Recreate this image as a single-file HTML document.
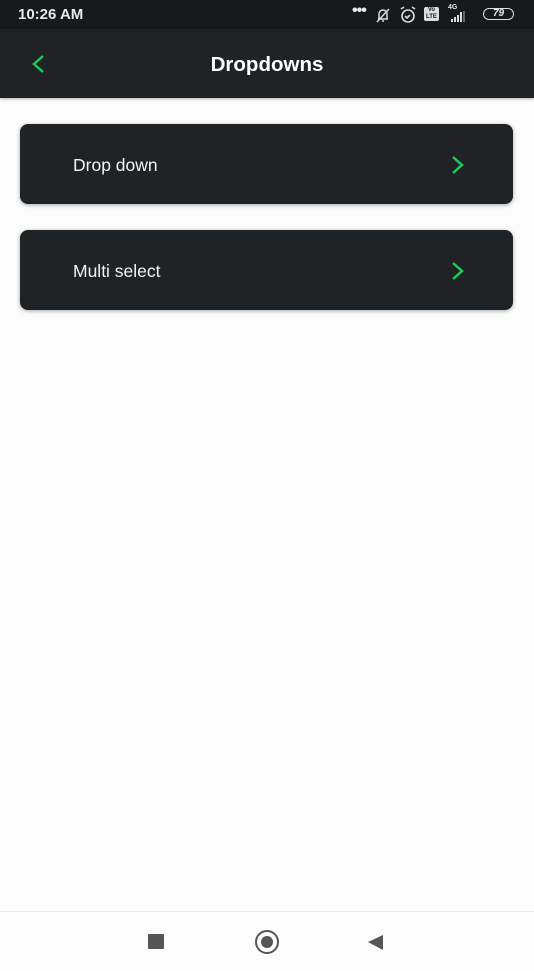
<!DOCTYPE html>
<html><head><style>
body{margin:0;width:534px;height:970px;background:#fbfcfb;font-family:"Liberation Sans",sans-serif;position:relative;overflow:hidden}
.sb{position:absolute;left:0;top:0;width:534px;height:29px;background:#17191b;color:#e8e8e8}
.hd{position:absolute;left:0;top:29px;width:534px;height:69px;background:#202326;box-shadow:0 1px 3px rgba(0,0,0,.3)}
.card{position:absolute;left:20px;width:493px;height:80px;background:#202326;border-radius:8px;box-shadow:0 1px 4px rgba(0,0,0,.35)}
.card span{position:absolute;left:53px;top:31px;color:#f2f2f2;font-size:17.5px}
.card svg{position:absolute;left:430px;top:31px}
.nav{position:absolute;left:0;top:911px;width:534px;height:59px;border-top:1px solid #ececec}
</style></head><body>
<div class="sb">
<span style="position:absolute;left:18px;top:6px;font-weight:bold;font-size:15px">10:26 AM</span>
<span style="position:absolute;left:352px;top:2px;font-size:16px;font-weight:bold;letter-spacing:-1px">•••</span>
<svg style="position:absolute;left:374px;top:6px" width="18" height="18" viewBox="0 0 18 18" fill="none" stroke="#ddd" stroke-width="1.5"><path d="M4 13h10M5 13V8a4 4 0 0 1 8 0v5M8 15h2M3 16L15 3"/></svg>
<svg style="position:absolute;left:398px;top:5px" width="20" height="19" viewBox="0 0 20 19" fill="none" stroke="#ddd" stroke-width="1.6"><circle cx="10" cy="11" r="6"/><path d="M7 11l2 2 3-3M3 4l3-2M17 4l-3-2"/></svg>
<div style="position:absolute;left:424px;top:7px;width:15px;height:14px;background:#ddd;border-radius:2px;font-size:6px;color:#17191b;text-align:center;line-height:7px;font-weight:bold">Vo<br>LTE</div>
<span style="position:absolute;left:448px;top:4px;font-size:7px;font-weight:bold">4G</span>
<svg style="position:absolute;left:446px;top:11px" width="20" height="11" viewBox="0 0 20 11" fill="#ddd"><rect x="5" y="8" width="2" height="3"/><rect x="8" y="6" width="2" height="5"/><rect x="11" y="4" width="2" height="7"/><rect x="14" y="1" width="2" height="10"/><rect x="17" y="0" width="2" height="11" fill="#666"/></svg>
<div style="position:absolute;left:483px;top:8px;width:31px;height:12px;border:1.5px solid #ddd;border-radius:7px;box-sizing:border-box;font-size:10px;font-weight:bold;text-align:center;line-height:10px;font-style:italic">79</div>
</div>
<div class="hd">
<svg style="position:absolute;left:30px;top:25px" width="16" height="20" viewBox="0 0 16 20" fill="none" stroke="#1ec95a" stroke-width="2.5"><path d="M13 2L4 10l9 8"/></svg>
<div style="position:absolute;left:0;width:534px;top:24px;text-align:center;color:#fff;font-weight:bold;font-size:20.5px">Dropdowns</div>
</div>
<div class="card" style="top:124px"><span>Drop down</span><svg width="16" height="20" viewBox="0 0 16 20" fill="none" stroke="#1ec95a" stroke-width="2.5"><path d="M3 2l9 8-9 8"/></svg></div>
<div class="card" style="top:230px"><span>Multi select</span><svg width="16" height="20" viewBox="0 0 16 20" fill="none" stroke="#1ec95a" stroke-width="2.5"><path d="M3 2l9 8-9 8"/></svg></div>
<div class="nav">
<div style="position:absolute;left:148px;top:22px;width:16px;height:15px;background:#555;border-radius:1px"></div>
<div style="position:absolute;left:255px;top:18px;width:24px;height:24px;border:2px solid #555;border-radius:50%;box-sizing:border-box"></div>
<div style="position:absolute;left:261px;top:24px;width:12px;height:12px;background:#555;border-radius:50%"></div>
<svg style="position:absolute;left:367px;top:22px" width="16" height="16" viewBox="0 0 16 16"><path d="M1 8L16 1v15z" fill="#555"/></svg>
</div>
</body></html>
